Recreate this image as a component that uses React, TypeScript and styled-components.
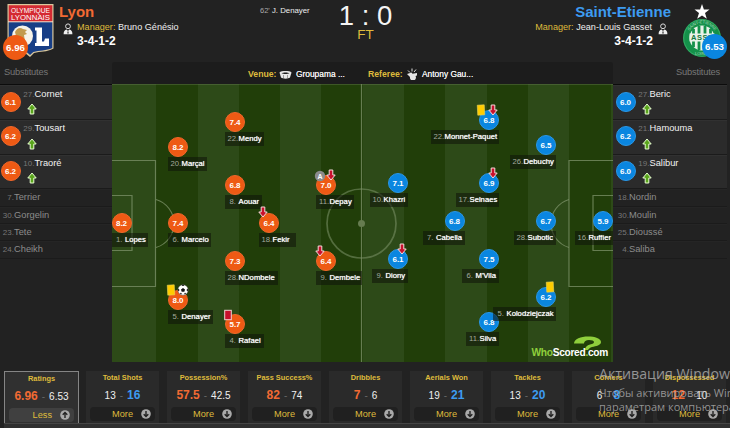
import React from 'react';
import styled, { createGlobalStyle, css } from 'styled-components';

type Side = 'home' | 'away';
type EventKind = 'yellow' | 'red' | 'off' | 'goal' | 'assist';

interface MatchEvent {
    kind: EventKind;
    dx: number;
    dy: number;
}

interface Player {
    x: number;
    y: number;
    width: number;
    rating: string;
    num: number;
    name: string;
    events?: MatchEvent[];
}

interface Sub {
    num: number;
    name: string;
    rating?: string;
}

interface Stat {
    title: string;
    home: string;
    away: string;
    best: Side;
}

const ORANGE = '#ee5a14';
const BLUE = '#0a86e0';
const YELLOW = '#dfbb3c';

const HOME_PLAYERS: Player[] = [
    { x: 9.5, y: 139, width: 36, rating: '8.2', num: 1, name: 'Lopes' },
    { x: 66, y: 63, width: 39, rating: '8.2', num: 20, name: 'Marçal' },
    { x: 66, y: 139, width: 43, rating: '7.4', num: 6, name: 'Marcelo' },
    {
        x: 66,
        y: 216,
        width: 45,
        rating: '8.0',
        num: 5,
        name: 'Denayer',
        events: [
            { kind: 'yellow', dx: -7, dy: -10 },
            { kind: 'goal', dx: 5, dy: -10 },
        ],
    },
    { x: 123, y: 38, width: 39, rating: '7.4', num: 22, name: 'Mendy' },
    { x: 123, y: 101, width: 37, rating: '6.8', num: 8, name: 'Aouar' },
    { x: 123, y: 177, width: 53, rating: '7.3', num: 28, name: 'NDombele' },
    {
        x: 123,
        y: 240,
        width: 39,
        rating: '5.7',
        num: 4,
        name: 'Rafael',
        events: [{ kind: 'red', dx: -7, dy: -9 }],
    },
    {
        x: 157,
        y: 139,
        width: 37,
        rating: '6.4',
        num: 18,
        name: 'Fekir',
        events: [{ kind: 'off', dx: -6.5, dy: -11 }],
    },
    {
        x: 214,
        y: 101,
        width: 38,
        rating: '7.0',
        num: 11,
        name: 'Depay',
        events: [
            { kind: 'assist', dx: -6.5, dy: -9 },
            { kind: 'off', dx: 5, dy: -10 },
        ],
    },
    {
        x: 214,
        y: 177,
        width: 46,
        rating: '6.4',
        num: 9,
        name: 'Dembele',
        events: [{ kind: 'off', dx: -6.5, dy: -10 }],
    },
];

const AWAY_PLAYERS: Player[] = [
    { x: 286, y: 98.5, width: 38, rating: '7.1', num: 10, name: 'Khazri' },
    {
        x: 286,
        y: 174.5,
        width: 36,
        rating: '6.1',
        num: 9,
        name: 'Diony',
        events: [{ kind: 'off', dx: 3.5, dy: -10 }],
    },
    { x: 342.5, y: 137, width: 42, rating: '6.8', num: 7, name: 'Cabella' },
    {
        x: 377,
        y: 35.5,
        width: 68,
        rating: '6.8',
        num: 22,
        name: 'Monnet-Paquet',
        events: [
            { kind: 'yellow', dx: -8, dy: -10 },
            { kind: 'off', dx: 4, dy: -10 },
        ],
    },
    {
        x: 377,
        y: 98.5,
        width: 43,
        rating: '6.9',
        num: 17,
        name: 'Selnaes',
        events: [{ kind: 'off', dx: 4, dy: -10 }],
    },
    { x: 377, y: 175, width: 37, rating: '7.5', num: 6, name: "M'Vila" },
    { x: 377, y: 238, width: 33, rating: '6.8', num: 11, name: 'Silva' },
    { x: 434, y: 61, width: 46, rating: '6.5', num: 26, name: 'Debuchy' },
    { x: 434, y: 137, width: 42, rating: '6.7', num: 28, name: 'Subotic' },
    {
        x: 434,
        y: 212.5,
        width: 63,
        rating: '6.2',
        num: 5,
        name: 'Kolodziejczak',
        events: [{ kind: 'yellow', dx: 4, dy: -10 }],
    },
    { x: 491, y: 137, width: 38, rating: '5.9', num: 16, name: 'Ruffier' },
];

const HOME_SUBS: Sub[] = [
    { num: 27, name: 'Cornet', rating: '6.1' },
    { num: 29, name: 'Tousart', rating: '6.2' },
    { num: 10, name: 'Traoré', rating: '6.2' },
    { num: 7, name: 'Terrier' },
    { num: 30, name: 'Gorgelin' },
    { num: 23, name: 'Tete' },
    { num: 24, name: 'Cheikh' },
];

const AWAY_SUBS: Sub[] = [
    { num: 27, name: 'Beric', rating: '6.0' },
    { num: 21, name: 'Hamouma', rating: '6.2' },
    { num: 19, name: 'Salibur', rating: '6.0' },
    { num: 18, name: 'Nordin' },
    { num: 30, name: 'Moulin' },
    { num: 25, name: 'Dioussé' },
    { num: 4, name: 'Saliba' },
];

const STATS: Stat[] = [
    { title: 'Ratings', home: '6.96', away: '6.53', best: 'home' },
    { title: 'Total Shots', home: '13', away: '16', best: 'away' },
    { title: 'Possession%', home: '57.5', away: '42.5', best: 'home' },
    { title: 'Pass Success%', home: '82', away: '74', best: 'home' },
    { title: 'Dribbles', home: '7', away: '6', best: 'home' },
    { title: 'Aerials Won', home: '19', away: '21', best: 'away' },
    { title: 'Tackles', home: '13', away: '20', best: 'away' },
    { title: 'Corners', home: '6', away: '8', best: 'away' },
    { title: 'Dispossessed', home: '12', away: '10', best: 'home' },
];

const GlobalStyle = createGlobalStyle`
    body {
        margin: 0;
        background: #222;
        overflow: hidden;
    }

    * {
        box-sizing: border-box;
    }
`;

const StyledPage = styled.div`
    position: relative;
    display: flex;
    flex-direction: column;
    width: 730px;
    height: 428px;
    overflow: hidden;
    background: #222;
    color: #eee;
    font-family: 'Liberation Sans', Arial, sans-serif;
    font-size: 9px;
    line-height: 1;
    white-space: nowrap;
`;

const StyledHeader = styled.header`
    display: grid;
    grid-template-columns: 240px 250px 240px;
    height: 62px;
`;

const StyledTeam = styled.div<{ $side: Side }>`
    display: flex;
    flex-direction: ${({ $side }) => ($side === 'home' ? 'row' : 'row-reverse')};
`;

const StyledCrest = styled.div<{ $side: Side }>`
    position: relative;
    width: 59px;
    height: 62px;

    svg {
        display: block;
    }
`;

const StyledTeamRating = styled.div<{ $side: Side }>`
    position: absolute;
    top: ${({ $side }) => ($side === 'home' ? 35 : 34)}px;
    left: ${({ $side }) => ($side === 'home' ? 3 : 31)}px;
    display: flex;
    align-items: center;
    justify-content: center;
    width: 25px;
    height: 25px;
    border-radius: 50%;
    background: ${({ $side }) => ($side === 'home' ? ORANGE : BLUE)};
    color: #fff;
    font-size: 9.7px;
    font-weight: bold;
`;

const StyledTeamInfo = styled.div<{ $side: Side }>`
    display: flex;
    flex-direction: column;
    align-items: ${({ $side }) => ($side === 'home' ? 'flex-start' : 'flex-end')};
    padding-top: 4px;
`;

const StyledTeamName = styled.div<{ $side: Side }>`
    height: 17px;
    color: ${({ $side }) => ($side === 'home' ? '#f26a33' : '#3d9bf0')};
    font-size: 15px;
    font-weight: bold;
`;

const StyledManager = styled.div<{ $side: Side }>`
    display: flex;
    flex-direction: ${({ $side }) => ($side === 'home' ? 'row' : 'row-reverse')};
    gap: ${({ $side }) => ($side === 'home' ? 4 : 6)}px;
    height: 14px;
    padding: ${({ $side }) => ($side === 'home' ? '0 0 0 4px' : '0 3px 0 0')};
    font-size: 9.1px;
    line-height: 13px;

    svg {
        margin-top: 2px;
    }

    b {
        color: ${YELLOW};
        font-weight: normal;
    }
`;

const StyledFormation = styled.div<{ $side: Side }>`
    padding: ${({ $side }) => ($side === 'home' ? '0 0 0 18px' : '0 18px 0 0')};
    color: #fff;
    font-size: 12px;
    font-weight: bold;
`;

const StyledResult = styled.div`
    display: flex;
    align-items: flex-start;
`;

const StyledScorer = styled.div`
    width: 70px;
    padding: 7px 0 0 20px;
    font-size: 7.8px;

    span {
        color: #aaa;
        font-size: 7.5px;
    }
`;

const StyledScore = styled.div`
    width: 111px;
    color: #f4f4f4;
    font-size: 27.5px;
    line-height: 32px;
    text-align: center;

    small {
        display: block;
        color: ${YELLOW};
        font-size: 13.5px;
        line-height: 6px;
    }
`;

const StyledBar = styled.div`
    display: grid;
    grid-template-columns: 112px 501px 117px;
    height: 22px;
`;

const StyledSubsTitle = styled.div<{ $side: Side }>`
    padding: 6px 10px 0 4px;
    color: #777;
    font-size: 9.3px;
    text-align: ${({ $side }) => ($side === 'home' ? 'left' : 'right')};
    letter-spacing: -0.02em;
`;

const StyledVenue = styled.div`
    display: flex;
    align-items: center;
    height: 22px;
    padding: 2px 0 0 136px;
    border-radius: 3px 3px 0 0;
    background: #1c1c1c;

    b {
        width: 31px;
        color: ${YELLOW};
        font-size: 8.7px;
    }

    b:nth-of-type(2) {
        width: 38px;
    }

    span {
        width: 76px;
        padding-left: 4px;
        font-size: 8.4px;
        text-shadow: 0 0 0.6px #fff;
    }
`;

const StyledBody = styled.div`
    display: grid;
    grid-template-columns: 112px 501px 117px;
    height: 278px;
`;

const StyledSubs = styled.div<{ $side: Side }>`
    width: ${({ $side }) => ($side === 'home' ? 112 : 114)}px;
    border-top: 1px solid #0c0c0c;
`;

const StyledSub = styled.div<{ $used: boolean }>`
    display: flex;
    border-bottom: 1px solid #1b1b1b;

    ${({ $used }) =>
        $used
            ? css`
                  height: 34.8px;
                  background: #2b2b2b;
                  color: #f2f2f2;
                  font-size: 9.3px;
                  box-shadow: inset 0 1px 0 #313131;
              `
            : css`
                  height: 17.3px;
                  background: #222;
                  color: #8c8c8c;
                  font-size: 9.3px;
                  box-shadow: inset 0 1px 0 #252525;
              `}
`;

const StyledSubText = styled.div<{ $used: boolean }>`
    display: flex;
    flex-direction: column;
    gap: 4px;
    padding-top: ${({ $used }) => ($used ? 4.5 : 4)}px;

    svg {
        margin-left: 5px;
    }
`;

const StyledSubName = styled.div<{ $side: Side; $used: boolean }>`
    display: flex;
    align-items: baseline;

    i {
        width: ${({ $side, $used }) => ($used ? 14 : $side === 'home' ? 14 : 16)}px;
        color: #777;
        font-size: 8px;
        font-style: normal;
        text-align: right;
    }
`;

const StyledSubRating = styled.div<{ $side: Side }>`
    width: 20px;
    margin: 6.5px 0 0 ${({ $side }) => ($side === 'home' ? 0.5 : 2.5)}px;
`;

const StyledRating = styled.div<{ $side: Side }>`
    display: flex;
    flex: none;
    align-items: center;
    justify-content: center;
    width: 20px;
    height: 20px;
    padding-top: 2px;
    border: 1px solid ${({ $side }) => ($side === 'home' ? '#f0662a' : '#2a97e6')};
    border-radius: 50%;
    background: ${({ $side }) => ($side === 'home' ? ORANGE : BLUE)};
    color: #fff;
    font-size: 8px;
    font-weight: bold;
`;

const StyledPitch = styled.div`
    position: relative;
    height: 278px;
    overflow: hidden;
    background: repeating-linear-gradient(90deg, #2d4a18 0 41.3px, #213e09 41.3px 82.6px) 2.7px 0 #2d4a18;
    background-repeat: no-repeat;

    > svg {
        display: block;
    }
`;

const StyledPin = styled.div<{ $side: Side; $x: number; $y: number }>`
    position: absolute;
    top: ${({ $y }) => $y - 10}px;
    ${({ $side, $x }) => ($side === 'home' ? `left: ${$x - 10}px;` : `right: ${501 - $x - 10}px;`)}
    display: flex;
    flex-direction: column;
    align-items: ${({ $side }) => ($side === 'home' ? 'flex-start' : 'flex-end')};
`;

const StyledLabel = styled.div<{ $width: number; $single: boolean }>`
    display: flex;
    align-items: center;
    width: ${({ $width }) => $width}px;
    height: 14px;
    background: rgba(14, 18, 10, 0.55);
    color: #fff;
    font-size: 7.7px;
    text-shadow: 0 0 0.7px #fff;

    i {
        flex: none;
        width: 13.5px;
        padding-right: ${({ $single }) => ($single ? 2.5 : 0.3)}px;
        color: #a3aa9c;
        font-style: normal;
        text-align: right;
        text-shadow: none;
    }
`;

const StyledEvent = styled.div<{ $side: Side; $dx: number; $dy: number }>`
    position: absolute;
    top: ${({ $dy }) => 4 + $dy}px;
    ${({ $side, $dx }) => ($side === 'home' ? `left: ${4 + $dx}px;` : `right: ${4 - $dx}px;`)}
    width: 12px;
    height: 12px;

    svg {
        display: block;
    }
`;

const StyledBrand = styled.div`
    position: absolute;
    right: 5px;
    bottom: 4px;
    display: flex;
    flex-direction: column;
    align-items: flex-end;
    color: #fff;
    font-size: 10.2px;
    font-weight: bold;
    letter-spacing: -0.3px;

    svg {
        margin: 0 6px -4px 0;
    }

    b {
        color: #8fcf3c;
    }
`;

const StyledStats = styled.div`
    display: flex;
    gap: 8px;
    height: 52px;
    margin-top: 9px;
    padding-left: 4px;
`;

const StyledStat = styled.div<{ $active: boolean }>`
    display: flex;
    flex: none;
    flex-direction: column;
    align-items: center;
    width: 73px;
    height: 52px;
    padding-top: 3px;
    background: #2a2a2a;

    ${({ $active }) =>
        $active &&
        css`
            width: 75px;
            margin-right: -1px;
            border: 1px solid #858585;
            border-bottom: 0;
            background: #303030;
        `}
`;

const StyledStatTitle = styled.div`
    height: 12px;
    color: ${YELLOW};
    font-size: 7.4px;
    font-weight: bold;
`;

const StyledStatValues = styled.div`
    display: flex;
    align-items: baseline;
    gap: 4px;
    height: 21px;
    color: #666;
    font-size: 10px;
    line-height: 19px;
`;

const StyledStatValue = styled.span<{ $side: Side; $best: boolean }>`
    color: #f0f0f0;

    ${({ $side, $best }) =>
        $best &&
        css`
            color: ${$side === 'home' ? '#f26a33' : '#3d9bf0'};
            font-size: 12px;
            font-weight: bold;
        `}
`;

const StyledMore = styled.button<{ $active: boolean }>`
    display: flex;
    align-items: center;
    justify-content: flex-end;
    gap: 8px;
    width: 65px;
    height: 14px;
    padding: 0 4px 0 0;
    border: 0;
    border-radius: 4px;
    background: ${({ $active }) => ($active ? '#404040' : '#202020')};
    color: ${YELLOW};
    font-family: inherit;
    font-size: 9.2px;
`;

const StyledFooter = styled.div`
    height: 5px;
    margin-left: 4px;
    border-top: 1px solid #454545;
    background: #2f2f2f;
`;

const StyledNotice = styled.div`
    position: absolute;
    top: 366px;
    left: 599px;
    color: rgba(190, 190, 190, 0.72);
    font-family: 'Open Sans', 'Noto Sans', sans-serif;
    font-size: 11px;
    line-height: 14px;

    strong {
        display: block;
        padding-bottom: 4px;
        font-size: 14.2px;
        font-weight: normal;
        line-height: 16px;
    }
`;

const Arrow: React.FC<{ color: string; up?: boolean }> = ({ color, up }) => (
    <svg width="12" height="12" viewBox="0 0 12 12">
        <path
            d="M4.2 1h3.6v5h2.4L6 11 1.8 6h2.4z"
            fill={color}
            stroke={up ? '#e8ffd0' : '#f5dada'}
            strokeWidth="1"
            transform={up ? 'rotate(180 6 6)' : undefined}
        />
    </svg>
);

const EventIcon: React.FC<{ kind: EventKind }> = ({ kind }) => {
    if (kind === 'off') {
        return <Arrow color="#c8102c" />;
    }

    return (
        <svg width="12" height="12" viewBox="0 0 12 12">
            {kind === 'yellow' && <rect x="2.5" y="1" width="7" height="10" fill="#fc0" stroke="#e8d35c" strokeWidth=".6" transform="rotate(-3 6 6)" />}
            {kind === 'red' && <rect x="2.7" y="1.3" width="6.6" height="9.4" fill="#c8102c" stroke="#f0d0d0" strokeWidth="1" />}
            {kind === 'goal' && (
                <>
                    <circle cx="6" cy="6" r="5.2" fill="#fff" stroke="#555" strokeWidth=".5" />
                    <path d="M6 3.9 8 5.4 7.3 7.7H4.7L4 5.400z" fill="#111" />
                    <path d="M5 1h2L6 2zM1.200 5l.9.6-.3 1.400-.7-.3zM10.800 5l-.9.600.300 1.400.700-.300zM3.100 9.400l1-.300.400 1zM8.900 9.400l-1-.300-.400 1z" fill="#111" stroke="#111" strokeWidth=".5" />
                </>
            )}
            {kind === 'assist' && (
                <>
                    <circle cx="6" cy="6" r="5.2" fill="#8b8b8b" />
                    <text x="6" y="8.6" textAnchor="middle" fill="#fff" fontSize="7" fontWeight="bold">
                        A
                    </text>
                </>
            )}
        </svg>
    );
};

const ManagerIcon: React.FC = () => (
    <svg width="10" height="12" viewBox="0 0 10 12">
        <circle cx="5" cy="3.3" r="2.4" fill="#222" stroke="#ddd" strokeWidth="1" />
        <path d="M.6 11.3c0-3 1-4.3 3-4.8L5 8l1.4-1.5c2 .5 3 1.8 3 4.8z" fill="#eee" />
        <path d="M5 7.5 5.7 10 5 11l-.7-1z" fill="#222" />
    </svg>
);

const LyonCrest: React.FC = () => (
    <svg width="59" height="62" viewBox="0 0 59 62">
        <path d="M7.5 4h46v44.5c-7 4-13 2.5-19.5 4.5L30 57l-5-4c-6-2-11 0-17.5-4z" fill="#d9c79d" />
        <path d="M8.7 5.2h43.6V22H8.7z" fill="#d42a32" />
        <path d="M8.7 22h43.6v26c-6 3-13 2-19 4L30 55l-4.5-4c-5-1.5-11 .5-16.8-3z" fill="#173e86" />
        <path d="M8 21.8h45" stroke="#f0e6d0" strokeWidth="1" />
        <text x="30.5" y="12.6" textAnchor="middle" textLength="39" lengthAdjust="spacingAndGlyphs" fill="#fff" fontSize="7.6">
            OLYMPIQUE
        </text>
        <text x="30.5" y="19.6" textAnchor="middle" textLength="39" lengthAdjust="spacingAndGlyphs" fill="#fff" fontSize="7.6">
            LYONNAIS
        </text>
        <circle cx="22.5" cy="36" r="10.5" fill="#f6f2e8" />
        <path d="M15 32c2-4 5-5 8-3l4 1-2 2 2 2-3 1 1 7-3-4-5 2-3 3 2-7z" fill="#c29a4d" />
        <path d="M35 27.5h7v14h2l1-3h4v7.500H35v-3h1.500V30.500H35z" fill="#fff" />
    </svg>
);

const EtienneCrest: React.FC = () => (
    <svg width="59" height="62" viewBox="0 0 59 62">
        <circle cx="31" cy="38" r="19" fill="#14914a" />
        <circle cx="31" cy="38" r="18.3" fill="none" stroke="#3fae6b" strokeWidth=".8" />
        <circle cx="31" cy="38" r="12.5" fill="#e8f2e9" />
        <path d="M22.5 29v18M28 26v24M34 26v24M39.5 29v18" stroke="#14914a" strokeWidth="2.8" />
        <path d="M18.5 33.5h25v8h-25z" fill="#e8f2e9" />
        <text x="31" y="40.2" textAnchor="middle" textLength="22" fill="#14783c" fontSize="7.5" fontWeight="bold">
            ASSE
        </text>
        <path id="etienne-arc" d="M17.5 33a14.3 14.3 0 0 1 27 0" fill="none" />
        <text fill="#b6dcc0" fontSize="4">
            <textPath href="#etienne-arc" startOffset="50%" textAnchor="middle">
                SAINT-ETIENNE
            </textPath>
        </text>
        <text x="30" y="55" textAnchor="middle" fill="#b6dcc0" fontSize="4">
            LOIRE
        </text>
        <path d="m31 4 1.9 5.5h5.6L34 13l1.8 5.8L31 15.5l-4.8 3.3L28 13l-4.5-3.5h5.6z" fill="#fff" />
    </svg>
);

const PitchLines: React.FC = () => (
    <svg width="501" height="278" viewBox="0 0 501 278" fill="none" stroke="#7e9369" strokeOpacity=".75" strokeWidth="1.2">
        <path d="M249.5 0v278" />
        <circle cx="249.5" cy="139.5" r="34.5" strokeWidth="1.7" strokeOpacity=".55" />
        <circle cx="249.5" cy="139.5" r="3.5" fill="#667c50" stroke="none" />
        <path d="M0 76.5h43.5v126H0M0 111.5h20v55H0M501 76.5h-44v126h44M501 111.5h-20v55h20" />
        <path d="M44 115.5a25 25 0 0 1 0 48M457 115.5a25 25 0 0 0 0 48" />
        <path d="M0 .5h501" strokeOpacity=".3" />
    </svg>
);

const Substitutes: React.FC<{ side: Side; subs: Sub[] }> = ({ side, subs }) => (
    <StyledSubs $side={side}>
        {subs.map((sub) => (
            <StyledSub key={sub.name} $used={!!sub.rating}>
                {sub.rating && (
                    <StyledSubRating $side={side}>
                        <StyledRating $side={side}>{sub.rating}</StyledRating>
                    </StyledSubRating>
                )}
                <StyledSubText $used={!!sub.rating}>
                    <StyledSubName $side={side} $used={!!sub.rating}>
                        <i>{sub.num}.</i>
                        {sub.name}
                    </StyledSubName>
                    {sub.rating && <Arrow color="#5aa51c" up />}
                </StyledSubText>
            </StyledSub>
        ))}
    </StyledSubs>
);

const Pin: React.FC<{ side: Side; player: Player }> = ({ side, player }) => (
    <StyledPin $side={side} $x={player.x} $y={player.y}>
        <StyledRating $side={side}>{player.rating}</StyledRating>
        <StyledLabel $width={player.width} $single={player.num < 10}>
            <i>{player.num}.</i>
            {player.name}
        </StyledLabel>
        {player.events?.map(({ kind, dx, dy }) => (
            <StyledEvent key={kind} $side={side} $dx={dx} $dy={dy}>
                <EventIcon kind={kind} />
            </StyledEvent>
        ))}
    </StyledPin>
);

const Team: React.FC<{ side: Side; name: string; manager: string; rating: string }> = ({ side, name, manager, rating }) => (
    <StyledTeam $side={side}>
        <StyledCrest $side={side}>
            {side === 'home' ? <LyonCrest /> : <EtienneCrest />}
            <StyledTeamRating $side={side}>{rating}</StyledTeamRating>
        </StyledCrest>
        <StyledTeamInfo $side={side}>
            <StyledTeamName $side={side}>{name}</StyledTeamName>
            <StyledManager $side={side}>
                <ManagerIcon />
                <span>
                    <b>Manager:</b> {manager}
                </span>
            </StyledManager>
            <StyledFormation $side={side}>3-4-1-2</StyledFormation>
        </StyledTeamInfo>
    </StyledTeam>
);

const StatTab: React.FC<{ stat: Stat; active: boolean }> = ({ stat, active }) => (
    <StyledStat $active={active}>
        <StyledStatTitle>{stat.title}</StyledStatTitle>
        <StyledStatValues>
            <StyledStatValue $side="home" $best={stat.best === 'home'}>
                {stat.home}
            </StyledStatValue>
            -
            <StyledStatValue $side="away" $best={stat.best === 'away'}>
                {stat.away}
            </StyledStatValue>
        </StyledStatValues>
        <StyledMore $active={active}>
            {active ? 'Less' : 'More'}
            <svg width="10" height="10" viewBox="0 0 10 10">
                <circle cx="5" cy="5" r="4.8" fill="#aaa" />
                <path
                    d="M5 2v5.500M2.700 5.200 5 7.500l2.300-2.300"
                    fill="none"
                    stroke="#222"
                    strokeWidth="1.4"
                    transform={active ? 'rotate(180 5 5)' : undefined}
                />
            </svg>
        </StyledMore>
    </StyledStat>
);

const App: React.FC = () => (
    <StyledPage>
        <GlobalStyle />
        <StyledHeader>
            <Team side="home" name="Lyon" manager="Bruno Génésio" rating="6.96" />
            <StyledResult>
                <StyledScorer>
                    <span>62'</span> J. Denayer
                </StyledScorer>
                <StyledScore>
                    1 : 0<small>FT</small>
                </StyledScore>
            </StyledResult>
            <Team side="away" name="Saint-Etienne" manager="Jean-Louis Gasset" rating="6.53" />
        </StyledHeader>
        <StyledBar>
            <StyledSubsTitle $side="home">Substitutes</StyledSubsTitle>
            <StyledVenue>
                <b>Venue:</b>
                <svg width="13" height="9" viewBox="0 0 13 9">
                    <path d="M.5 2.5C2 .6 11 .6 12.5 2.500L11 7.500C9 9 4 9 2 7.500z" fill="#e6e6e6" />
                    <path d="M2.500 3.200c2-1 6-1 8 0-2 1-6 1-8 0z" fill="#1c1c1c" />
                    <path d="M4.500 5v3M8.500 5v3" stroke="#777" strokeWidth=".7" />
                </svg>
                <span>Groupama ...</span>
                <b>Referee:</b>
                <svg width="12" height="12" viewBox="0 0 12 12">
                    <path d="m2 2.500 2 2M6 .500v3M10 1.500 8 4" stroke="#ddd" strokeWidth="1" />
                    <path d="m1 6 4.500-1.500 1 1.200L11 5v2.500l-1.500.500a3 3 0 1 1-5.500 1z" fill="#e6e6e6" />
                </svg>
                <span>Antony Gau...</span>
            </StyledVenue>
            <StyledSubsTitle $side="away">Substitutes</StyledSubsTitle>
        </StyledBar>
        <StyledBody>
            <Substitutes side="home" subs={HOME_SUBS} />
            <StyledPitch>
                <PitchLines />
                {HOME_PLAYERS.map((player) => (
                    <Pin key={player.name} side="home" player={player} />
                ))}
                {AWAY_PLAYERS.map((player) => (
                    <Pin key={player.name} side="away" player={player} />
                ))}
                <StyledBrand>
                    <svg width="29" height="16" viewBox="0 0 29 16">
                        <path
                            d="M1 7.500C1 3 8 .5 15 .5S28 2.500 28 6c0 3.500-5 4-9 5-2 .500-3 1.500-4 3h-3c0-3 2-4.500 5-5.500 3-.800 4-1.300 4-2.500S19 4 16 4s-5 1.500-5 3.500z"
                            fill="#8fcf3c"
                        />
                    </svg>
                    <div>
                        <b>Who</b>Scored<b>.</b>com
                    </div>
                </StyledBrand>
            </StyledPitch>
            <Substitutes side="away" subs={AWAY_SUBS} />
        </StyledBody>
        <StyledStats>
            {STATS.map((stat, i) => (
                <StatTab key={stat.title} stat={stat} active={i === 0} />
            ))}
        </StyledStats>
        <StyledFooter />
        <StyledNotice>
            <strong>Активация Window</strong>
            Чтобы активировать Win
            <br />
            параметрам компьютера
        </StyledNotice>
    </StyledPage>
);

export default App;
